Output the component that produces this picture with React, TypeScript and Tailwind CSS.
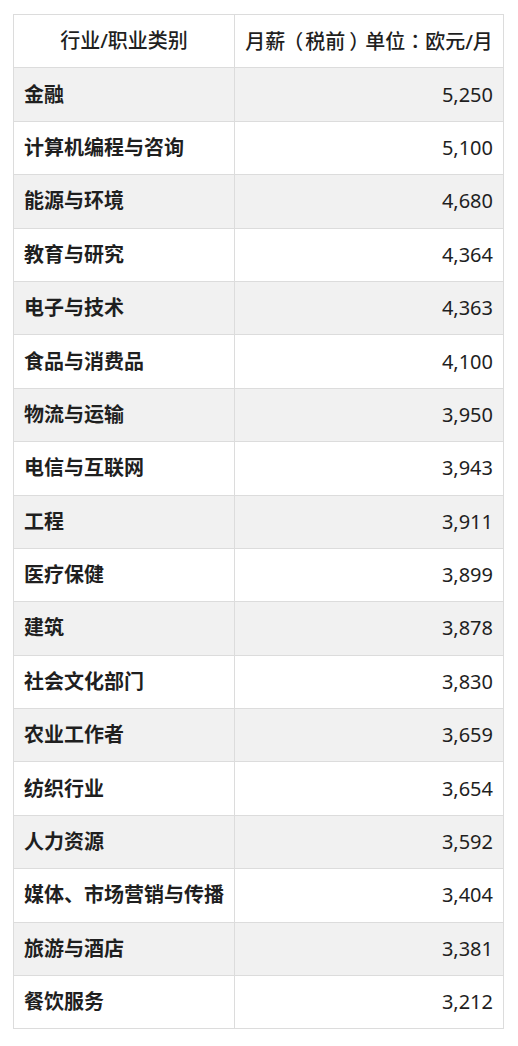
const rows: [string, string][] = [
  ["金融", "5,250"],
  ["计算机编程与咨询", "5,100"],
  ["能源与环境", "4,680"],
  ["教育与研究", "4,364"],
  ["电子与技术", "4,363"],
  ["食品与消费品", "4,100"],
  ["物流与运输", "3,950"],
  ["电信与互联网", "3,943"],
  ["工程", "3,911"],
  ["医疗保健", "3,899"],
  ["建筑", "3,878"],
  ["社会文化部门", "3,830"],
  ["农业工作者", "3,659"],
  ["纺织行业", "3,654"],
  ["人力资源", "3,592"],
  ["媒体、市场营销与传播", "3,404"],
  ["旅游与酒店", "3,381"],
  ["餐饮服务", "3,212"],
];

const App = () => {
  return (
    <div className="min-h-screen bg-white pt-[14px] pl-[13px] font-['Noto_Sans','Noto_Sans_CJK_SC',sans-serif] text-[20px] text-[#1f1f1f]">
      <table className="w-[491px] border-collapse">
        <thead>
          <tr className="h-[53.4px]">
            <th className="w-[221px] border border-[#dcdcdc] px-[10px] text-center font-medium">
              行业/职业类别
            </th>
            <th className="border border-[#dcdcdc] px-[10px] text-center font-medium whitespace-nowrap">
              {/* full-width punctuation is centred in the reference */}
              月薪<span className="inline-block w-[1em] -indent-[0.2em]">（</span>税前<span className="inline-block pl-[0.2em] tracking-[-0.2em]">）</span>单位<span className="font-['Noto_Sans_CJK_TC',sans-serif]">：</span>欧元/月
            </th>
          </tr>
        </thead>
        <tbody>
          {rows.map(([name, salary], i) => (
            <tr key={name} className={i % 2 === 0 ? "h-[53.4px] bg-[#f1f1f1]" : "h-[53.4px] bg-white"}>
              <td className="border border-[#dcdcdc] px-[10px] text-left font-bold">{name}</td>
              <td className="border border-[#dcdcdc] px-[10px] text-right">{salary}</td>
            </tr>
          ))}
        </tbody>
      </table>
    </div>
  );
};

export default App;
